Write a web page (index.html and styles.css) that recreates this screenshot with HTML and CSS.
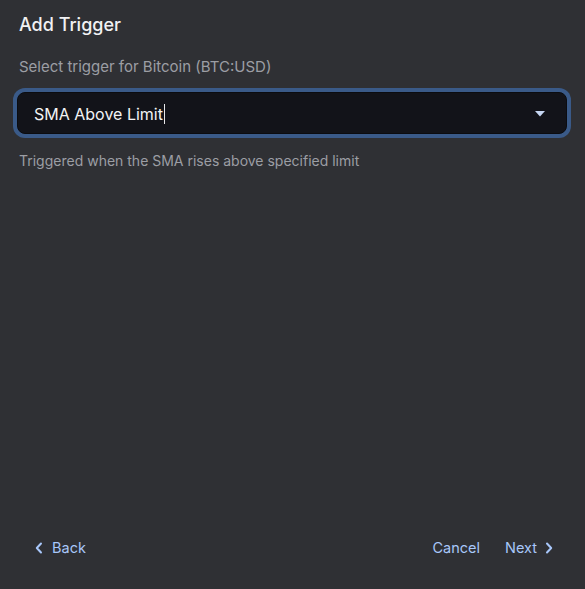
FILE: index.html
```html
<!DOCTYPE html>
<html>
<head>
<meta charset="utf-8">
<link rel="stylesheet" href="styles.css">
</head>
<body>
<div class="dialog">
  <div class="content">
    <h1 class="title">Add Trigger</h1>
    <p class="label">Select trigger for Bitcoin (BTC:USD)</p>
    <div class="select">
      <span class="value">SMA Above Limit<span class="caret"></span></span>
      <svg class="arrow" width="10" height="6" viewBox="0 0 10 6"><path d="M0 0H10L5 5.5Z" fill="#c6d6f2"/></svg>
    </div>
    <p class="help">Triggered when the SMA rises above specified limit</p>
  </div>
  <div class="footer">
    <button class="btn back">
      <svg width="8" height="12" viewBox="0 0 8 12"><path d="M6 1.5L1.8 6L6 10.5" fill="none" stroke="#a8c7fa" stroke-width="2" stroke-linecap="round" stroke-linejoin="round"/></svg>
      Back
    </button>
    <div class="right">
      <button class="btn">Cancel</button>
      <button class="btn next">Next
        <svg width="8" height="12" viewBox="0 0 8 12"><path d="M2 1.5L6.2 6L2 10.5" fill="none" stroke="#a8c7fa" stroke-width="2" stroke-linecap="round" stroke-linejoin="round"/></svg>
      </button>
    </div>
  </div>
</div>
</body>
</html>
```

FILE: styles.css
```css
html, body {
  margin: 0;
  padding: 0;
  background: #2f3034;
  font-family: Inter, "Noto Sans", sans-serif;
}
.dialog {
  height: 589px;
  display: flex;
  flex-direction: column;
  justify-content: space-between;
  box-sizing: border-box;
}
.content {
  padding: 14px 18px 0 19px;
}
.title {
  margin: 0;
  font-size: 18px;
  font-weight: 500;
  color: #f1f1f3;
  line-height: 22px;
}
.label {
  margin: 21px 0 0;
  font-size: 15px;
  color: #9c9ea4;
  line-height: 20px;
}
.select {
  margin: 15px 0 0 -2px;
  height: 42px;
  box-sizing: border-box;
  background: #121319;
  border: 1px solid #0b0c10;
  border-radius: 8px;
  box-shadow: 0 0 0 4px #3a5a88;
  display: flex;
  align-items: center;
  justify-content: space-between;
  padding: 1px 21px 0 16px;
}
.value {
  font-size: 16px;
  color: #f3f3f5;
  display: flex;
  align-items: center;
}
.caret {
  display: inline-block;
  width: 1px;
  height: 20px;
  background: #e8e8ea;
  margin-left: 1px;
}
.help {
  margin: 17px 0 0;
  font-size: 14px;
  color: #9c9ea4;
  line-height: 20px;
}
.footer {
  display: flex;
  justify-content: space-between;
  align-items: center;
  padding: 0 32px 33px 35px;
}
.right {
  display: flex;
  gap: 25px;
}
.btn {
  background: none;
  border: none;
  padding: 0;
  font-family: inherit;
  font-size: 14.5px;
  color: #a8c7fa;
  display: flex;
  align-items: center;
  gap: 9px;
}
.next { gap: 8px; }
```
